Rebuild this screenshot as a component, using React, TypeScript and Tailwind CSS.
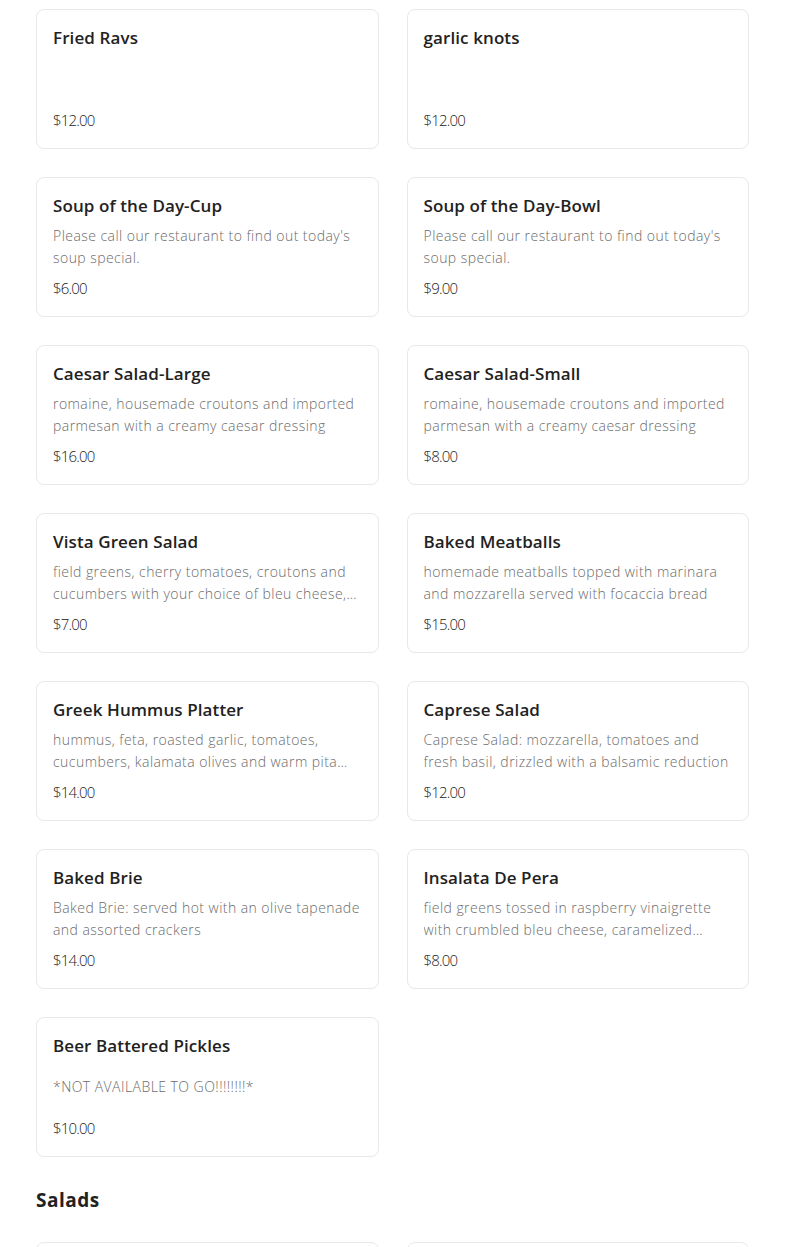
const items = [
  { name: "Fried Ravs", desc: "", price: "$12.00" },
  { name: "garlic knots", desc: "", price: "$12.00" },
  { name: "Soup of the Day-Cup", desc: "Please call our restaurant to find out today's soup special.", price: "$6.00" },
  { name: "Soup of the Day-Bowl", desc: "Please call our restaurant to find out today's soup special.", price: "$9.00" },
  { name: "Caesar Salad-Large", desc: "romaine, housemade croutons and imported parmesan with a creamy caesar dressing", price: "$16.00" },
  { name: "Caesar Salad-Small", desc: "romaine, housemade croutons and imported parmesan with a creamy caesar dressing", price: "$8.00" },
  { name: "Vista Green Salad", desc: "field greens, cherry tomatoes, croutons and cucumbers with your choice of bleu cheese, ranch, italian or balsamic dressing", price: "$7.00" },
  { name: "Baked Meatballs", desc: "homemade meatballs topped with marinara and mozzarella served with focaccia bread", price: "$15.00" },
  { name: "Greek Hummus Platter", desc: "hummus, feta, roasted garlic, tomatoes, cucumbers, kalamata olives and warm pita bread", price: "$14.00" },
  { name: "Caprese Salad", desc: "Caprese Salad: mozzarella, tomatoes and fresh basil, drizzled with a balsamic reduction", price: "$12.00" },
  { name: "Baked Brie", desc: "Baked Brie: served hot with an olive tapenade and assorted crackers", price: "$14.00" },
  { name: "Insalata De Pera", desc: "field greens tossed in raspberry vinaigrette with crumbled bleu cheese, caramelized pears and candied walnuts", price: "$8.00" },
  { name: "Beer Battered Pickles", desc: "*NOT AVAILABLE TO GO!!!!!!!!*", price: "$10.00" },
];

function MenuCard({ name, desc, price }: { name: string; desc: string; price: string }) {
  return (
    <div className="h-[140px] rounded-lg border border-[#e8e8e8] bg-white px-4 py-4 flex flex-col justify-between">
      <h3 className="text-[17px] leading-6 font-semibold tracking-[0.1px] text-[#222222]">{name}</h3>
      {desc ? (
        <p className="text-[14px] leading-[22px] font-light tracking-[0.45px] text-[#6b6b6b] line-clamp-2">{desc}</p>
      ) : (
        <span />
      )}
      <p className="text-[15px] leading-6 font-light tracking-[-0.8px] text-[#222222]">{price}</p>
    </div>
  );
}

export default function App() {
  return (
    <div className="min-h-screen bg-white" style={{ fontFamily: "'Open Sans', 'Noto Sans', sans-serif" }}>
      <div className="px-9 pt-[9px]">
        <div className="grid grid-cols-2 gap-x-7 gap-y-7">
          {items.map((it) => (
            <MenuCard key={it.name} {...it} />
          ))}
        </div>
        <h2 className="mt-[29px] text-[19px] leading-7 font-bold tracking-[0.5px] text-[#222222]">Salads</h2>
        <div className="mt-7 grid grid-cols-2 gap-x-7 gap-y-7">
          <MenuCard name="House Salad" desc="field greens, tomatoes and cucumbers" price="$6.00" />
          <MenuCard name="Chopped Salad" desc="romaine, salami, provolone, olives and peppers" price="$9.00" />
        </div>
      </div>
    </div>
  );
}
